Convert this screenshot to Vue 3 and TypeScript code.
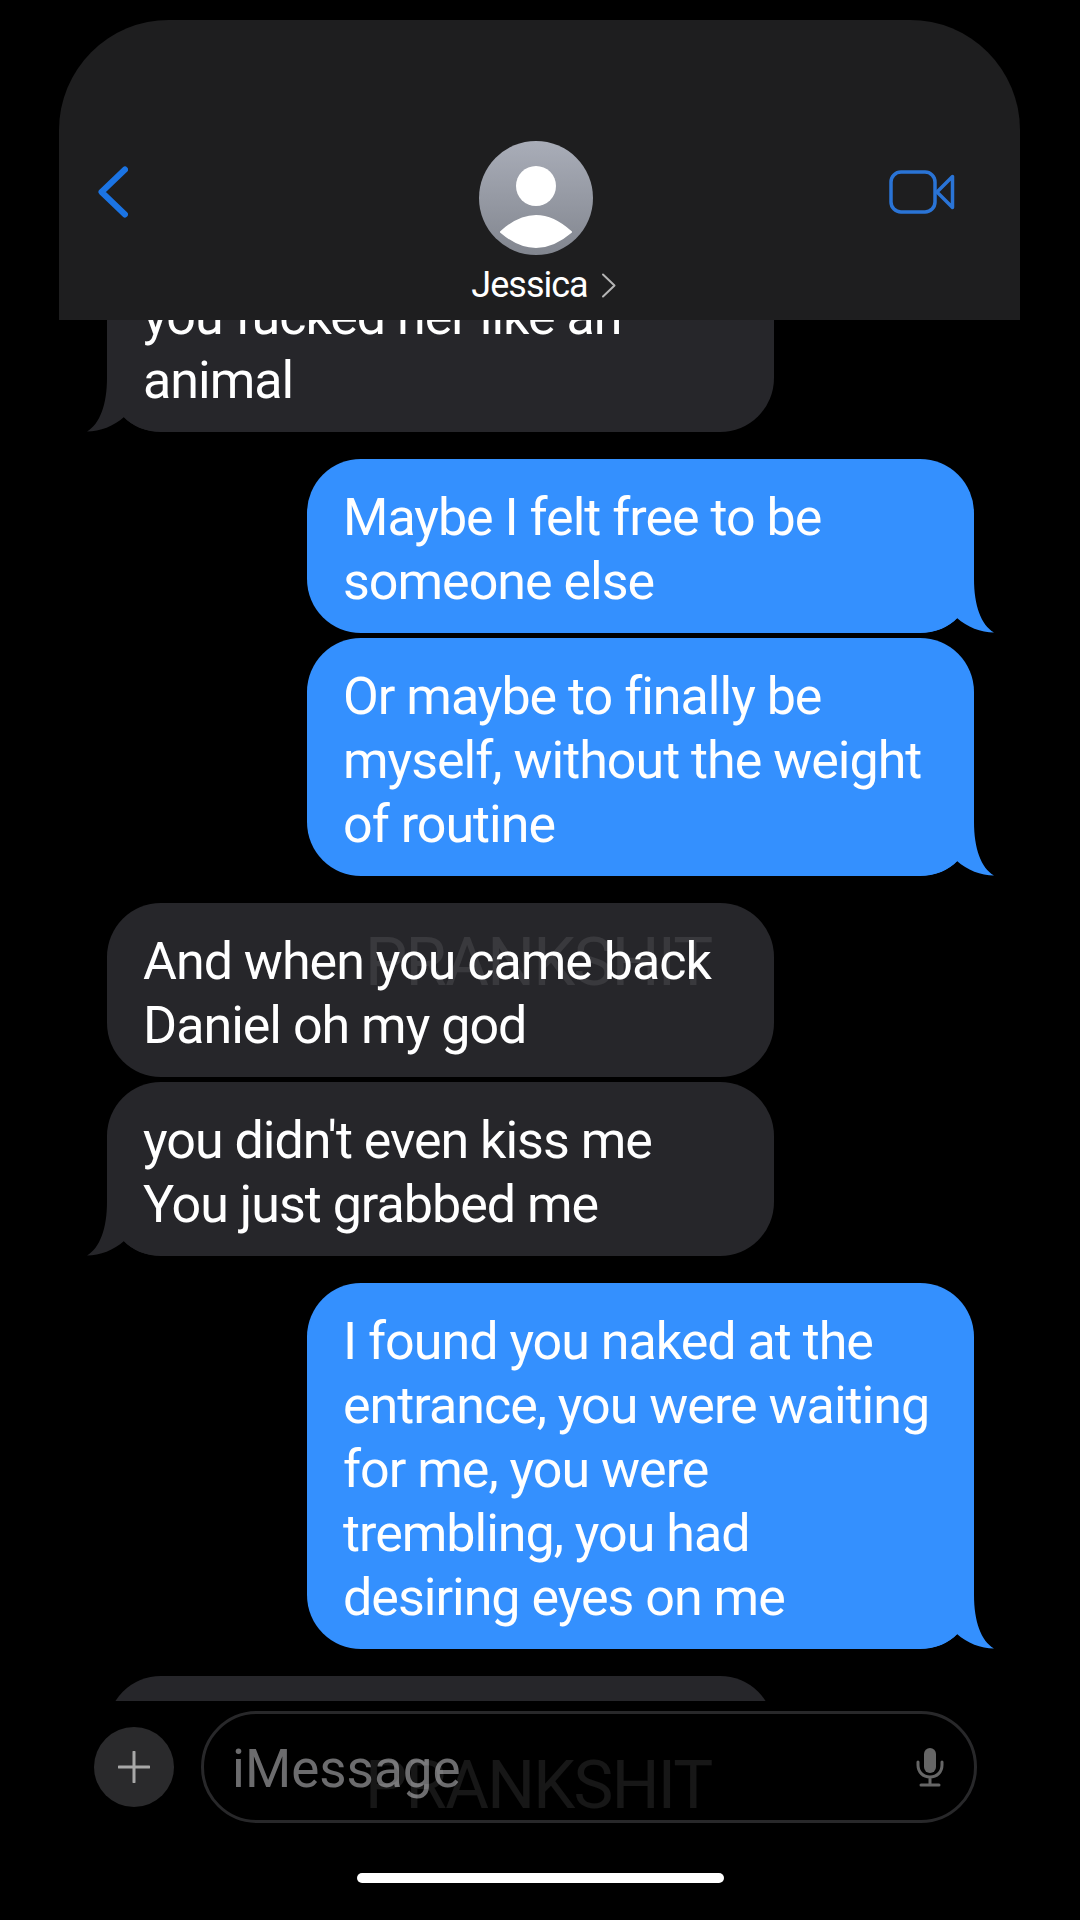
<template>
  <div class="phone">
    <header class="nav">
      <svg class="back" width="30" height="52" viewBox="0 0 30 52">
        <path d="M27 3.500L3.500 26L27 48.500" fill="none" stroke="#1b74e4" stroke-width="6" stroke-linecap="round" stroke-linejoin="round" />
      </svg>
      <div class="contact">
        <svg class="avatar" width="114" height="116" viewBox="0 0 114 116">
          <defs>
            <linearGradient id="avatarFill" x1="0" y1="0" x2="0" y2="1">
              <stop offset="0" stop-color="#a9adb8" />
              <stop offset="1" stop-color="#82868f" />
            </linearGradient>
          </defs>
          <circle cx="57" cy="58" r="57" fill="url(#avatarFill)" />
          <circle cx="57" cy="46" r="20" fill="#fff" />
          <path d="M22 92Q57 60 92 92Q57 122 22 92Z" fill="#fff" stroke="#fff" stroke-width="2" stroke-linejoin="round" />
        </svg>
        <div class="name">
          <span>Jessica</span>
          <svg width="16" height="25" viewBox="0 0 16 25">
            <path d="M2 1.500L13.500 12.500L2 23.500" fill="none" stroke="#b5b5b5" stroke-width="2" stroke-linecap="round" stroke-linejoin="round" />
          </svg>
        </div>
      </div>
      <svg class="video" width="66" height="44" viewBox="0 0 66 44">
        <rect x="2" y="2" width="44" height="40" rx="10" fill="none" stroke="#2a74d6" stroke-width="3.500" />
        <path d="M48 22L63.500 6.500V37.500Z" fill="none" stroke="#2a74d6" stroke-width="3.500" stroke-linejoin="round" />
      </svg>
    </header>

    <main class="thread">
      <div
        v-for="msg in messages"
        :key="msg.id"
        class="bubble"
        :class="[msg.mine ? 'mine' : 'theirs', { grouped: msg.grouped }]"
      >
        <span class="text">{{ msg.text }}</span>
        <svg v-if="msg.tail" class="tail" width="75" height="54" viewBox="0 0 75 54">
          <path
            d="M53 0C53 26 60 46 73 53.500C60 53.500 46 48 36 39C28 48 15 53.500 0 53.500V0Z"
            fill="currentColor"
          />
        </svg>
      </div>
    </main>

    <footer class="composer">
      <button class="plus" type="button">
        <svg width="32" height="32" viewBox="0 0 32 32">
          <path d="M16 1V31M1 16H31" stroke="#a8a8a8" stroke-width="3" stroke-linecap="round" />
        </svg>
      </button>
      <div class="field">
        <span class="placeholder">iMessage</span>
        <svg width="30" height="40" viewBox="0 0 30 40">
          <rect x="9" y="1" width="12" height="25" rx="6" fill="#666" />
          <path d="M3 15V18C3 25 8 30 15 30C22 30 27 25 27 18V15M15 30V38M6 38H24" fill="none" stroke="#666" stroke-width="3" stroke-linecap="round" />
        </svg>
      </div>
    </footer>
    <div class="home-bar"></div>

    <span class="mark mark-top">PRANKSHIT</span>
    <span class="mark mark-bottom">PRANKSHIT</span>
  </div>
</template>

<script setup lang="ts">
interface Message {
  id: number;
  text: string;
  mine: boolean;
  tail: boolean;
  grouped?: boolean; // sits right under the previous bubble
}

const messages: Message[] = [
  { id: 1, text: "you fucked her like an\nanimal", mine: false, tail: true },
  { id: 2, text: "Maybe I felt free to be\nsomeone else", mine: true, tail: true },
  {
    id: 3,
    text: "Or maybe to finally be\nmyself, without the weight\nof routine",
    mine: true,
    tail: true,
    grouped: true,
  },
  { id: 4, text: "And when you came back\nDaniel oh my god", mine: false, tail: false },
  {
    id: 5,
    text: "you didn't even kiss me\nYou just grabbed me",
    mine: false,
    tail: true,
    grouped: true,
  },
  {
    id: 6,
    text: "I found you naked at the\nentrance, you were waiting\nfor me, you were\ntrembling, you had\ndesiring eyes on me",
    mine: true,
    tail: true,
  },
  { id: 7, text: "", mine: false, tail: false },
];
</script>

<style>
html,
body {
  margin: 0;
  background: #000;
}
</style>

<style scoped>
.phone {
  position: relative;
  width: 1080px;
  height: 1920px;
  overflow: hidden;
  background: #000;
  font-family: Roboto, "Liberation Sans", sans-serif;
  color: #fff;
}

.nav {
  display: grid;
  grid-template-columns: 1fr auto 1fr;
  align-items: start;
  box-sizing: border-box;
  height: 300px;
  margin: 20px 60px 0 59px;
  padding: 0 46px 0 39px;
  border-radius: 110px 110px 0 0;
  background: #1e1e1f;
}
.back {
  margin-top: 146px;
}
.video {
  justify-self: end;
  margin: 150px 19px 0 0;
}
.contact {
  display: flex;
  flex-direction: column;
  align-items: center;
  margin-top: 120px;
}
.name {
  display: flex;
  align-items: center;
  gap: 13px;
  margin: 7px 0 0 16px;
  font-size: 36px;
  line-height: 44px;
  letter-spacing: -1px;
}

.thread {
  display: flex;
  flex-direction: column;
  height: 1381px;
  overflow: hidden;
}
.bubble {
  position: relative;
  flex: none;
  box-sizing: border-box;
  width: 667px;
  min-height: 174px;
  margin-top: 27px;
  padding: 27px 30px 19px 36px;
  border-radius: 54px;
  font-size: 52px;
  line-height: 64px;
  letter-spacing: -1px;
  white-space: pre-line;
}
.bubble:first-child {
  margin-top: -62px;
}
.bubble.grouped {
  margin-top: 5px;
}
.text {
  position: relative;
  z-index: 1;
}
.theirs {
  margin-left: 107px;
  background: #26262a;
  color: #fff;
}
.mine {
  align-self: flex-end;
  margin-right: 106px;
  background: #3490fe;
}
.tail {
  position: absolute;
  right: -22px;
  bottom: 0;
  color: #3490fe;
}
.theirs .tail {
  right: auto;
  left: -22px;
  transform: scaleX(-1);
  color: #26262a;
}

.composer {
  display: flex;
  align-items: center;
  gap: 27px;
  padding: 10px 103px 0 94px;
}
.plus {
  display: flex;
  align-items: center;
  justify-content: center;
  flex: none;
  width: 80px;
  height: 80px;
  padding: 0;
  border: none;
  border-radius: 50%;
  background: #2a2a2c;
}
.field {
  display: flex;
  flex: 1;
  align-items: center;
  justify-content: space-between;
  box-sizing: border-box;
  height: 112px;
  padding: 0 29px 0 28px;
  border: 3px solid #28282a;
  border-radius: 56px;
}
.placeholder {
  padding-top: 3px;
  font-size: 53px;
  color: #6c6c6e;
}

.home-bar {
  width: 367px;
  height: 10px;
  margin: 50px auto 0;
  border-radius: 5px;
  background: #fff;
}

/* semi transparent so it only shows on the dark parts */
.mark {
  position: absolute;
  left: 365px;
  font-size: 67px;
  font-weight: 400;
  line-height: 70px;
  letter-spacing: -1.700px;
  color: rgba(255, 255, 255, 0.09);
  pointer-events: none;
}
.mark-top {
  top: 927px;
}
.mark-bottom {
  top: 1750px;
}
</style>
